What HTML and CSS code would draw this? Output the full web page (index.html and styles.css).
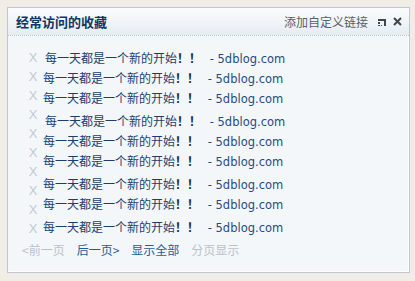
FILE: index.html
```html
<!DOCTYPE html>
<html lang="zh-CN">

<head>
  <meta charset="UTF-8" />
  <title>经常访问的收藏</title>
  <link rel="stylesheet" href="styles.css">
</head>

<body>
  <div class="fav-panel">

    <div class="fav-head">
      <h2 class="fav-title">经常访问的收藏</h2>
      <div class="fav-tools">
        <a class="add-link" href="#">添加自定义链接</a>
        <button class="tool-btn" title="还原">
          <svg width="9" height="9" viewBox="0 0 9 9">
            <path d="M0 2h8v7h-2v-5h-6z" fill="#3d4650" />
            <rect x="0" y="5" width="2" height="2" fill="#3d4650" />
            <rect x="0" y="8" width="2" height="1" fill="#3d4650" />
            <rect x="3" y="8" width="1" height="1" fill="#3d4650" />
          </svg>
        </button>
        <button class="tool-btn" title="关闭">
          <svg width="9" height="9" viewBox="0 0 9 9">
            <path d="M1 1l7 7M8 1l-7 7" stroke="#3d4650" stroke-width="2" />
          </svg>
        </button>
      </div>
    </div>

    <div class="fav-body">
      <ul class="del-col">
        <li>X</li><li>X</li><li>X</li><li>X</li><li>X</li>
        <li>X</li><li>X</li><li>X</li><li>X</li><li>X</li>
      </ul>
      <ul class="link-col">
        <li class="link-row indent"><a href="#">每一天都是一个新的开始<b>！！</b></a> <span class="site">- 5dblog.com</span></li>
        <li class="link-row"><a href="#">每一天都是一个新的开始<b>！！</b></a> <span class="site">- 5dblog.com</span></li>
        <li class="link-row"><a href="#">每一天都是一个新的开始<b>！！</b></a> <span class="site">- 5dblog.com</span></li>
        <li class="link-row indent tall"><a href="#">每一天都是一个新的开始<b>！！</b></a> <span class="site">- 5dblog.com</span></li>
        <li class="link-row"><a href="#">每一天都是一个新的开始<b>！！</b></a> <span class="site">- 5dblog.com</span></li>
        <li class="link-row"><a href="#">每一天都是一个新的开始<b>！！</b></a> <span class="site">- 5dblog.com</span></li>
        <li class="link-row tall"><a href="#">每一天都是一个新的开始<b>！！</b></a> <span class="site">- 5dblog.com</span></li>
        <li class="link-row"><a href="#">每一天都是一个新的开始<b>！！</b></a> <span class="site">- 5dblog.com</span></li>
        <li class="link-row tall"><a href="#">每一天都是一个新的开始<b>！！</b></a> <span class="site">- 5dblog.com</span></li>
      </ul>
    </div>

    <div class="pager">
      <span class="pager-off">&lt;前一页</span>
      <a class="pager-link" href="#">后一页&gt;</a>
      <a class="pager-link" href="#">显示全部</a>
      <span class="pager-off">分页显示</span>
    </div>

  </div>
</body>

</html>
```

FILE: styles.css
```css
/* Base Reset */
* {
  margin: 0;
  padding: 0;
  box-sizing: border-box;
}

body {
  background-color: #efede6;
  padding: 7px 6px 9px 7px;
  font-family: "Noto Sans CJK SC", "DejaVu Sans", sans-serif;
  font-size: 12px;
}

ul {
  list-style: none;
}

a {
  text-decoration: none;
}

/* Panel */
.fav-panel {
  width: 403px;
  height: 266px;
  background-color: #f3f7fa;
  border: 1px solid #bfc8d1;
  box-shadow: inset -1px -1px 0 #ffffff;
}

/* Header */
.fav-head {
  height: 28px;
  padding: 0 7px 0 8px;
  display: flex;
  align-items: center;
  justify-content: space-between;
  background: linear-gradient(#fbfcfd, #e5edf3);
  border-bottom: 1px dotted #b4c3cf;
}

.fav-title {
  font-size: 13px;
  font-weight: bold;
  color: #0d3866;
}

.fav-tools {
  display: flex;
  align-items: center;
  gap: 6px;
}

.add-link {
  font-size: 12px;
  color: #59606a;
  margin-right: 4px;
}

.tool-btn {
  border: none;
  background: transparent;
  width: 9px;
  height: 10px;
  display: flex;
  align-items: center;
  justify-content: center;
  cursor: pointer;
}

/* List */
.fav-body {
  display: flex;
  padding: 12px 0 0 16px;
  height: 200px;
}

.del-col {
  width: 18px;
}

.del-col li {
  height: 19px;
  line-height: 19px;
  font-family: "Liberation Sans", sans-serif;
  font-size: 13px;
  color: #c3cad1;
  text-align: center;
}

.link-col {
  padding-left: 1px;
}

.link-row {
  height: 20px;
  line-height: 20px;
  white-space: nowrap;
  color: #24426c;
}

.link-row.indent {
  padding-left: 2px;
}

.link-row.tall {
  margin-top: 3px;
}

.link-row a {
  color: #1d3e6d;
}

.link-row b {
  color: #1a2c45;
  margin-right: 6px;
}

.site {
  font-family: "DejaVu Sans", sans-serif;
  font-size: 11.5px;
  color: #274b7e;
}

/* Pager */
.pager {
  display: flex;
  gap: 12px;
  padding: 5px 0 0 14px;
}

.pager-off {
  color: #b9c2cb;
}

.pager-link {
  color: #1f5c9c;
}
```
